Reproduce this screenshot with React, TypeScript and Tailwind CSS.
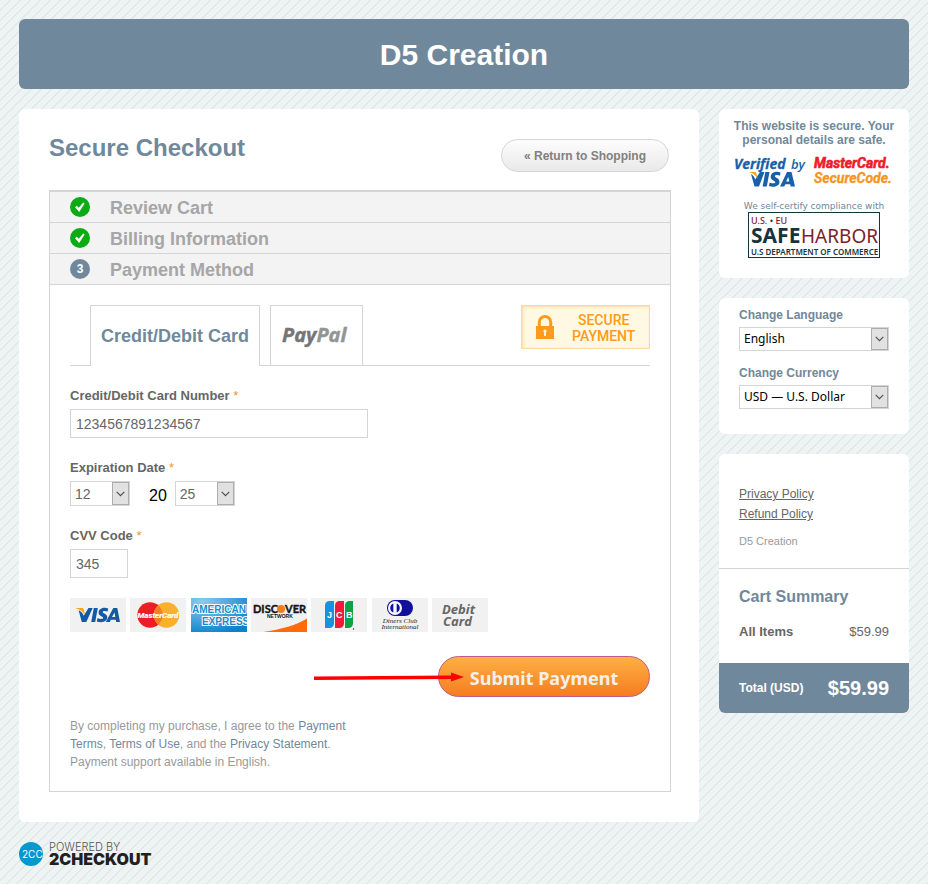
import React, { useState } from 'react';

interface Option {
  value: string;
  label: string;
}

const steps = [
  { id: 1, title: 'Review Cart', done: true },
  { id: 2, title: 'Billing Information', done: true },
  { id: 3, title: 'Payment Method', done: false },
];

const months: Option[] = ['01', '02', '03', '04', '05', '06', '07', '08', '09', '10', '11', '12'].map((m) => ({ value: m, label: m }));
const years: Option[] = ['24', '25', '26', '27', '28', '29', '30'].map((y) => ({ value: y, label: y }));
const languages: Option[] = [
  { value: 'en', label: 'English' },
  { value: 'es', label: 'Español' },
  { value: 'fr', label: 'Français' },
];
const currencies: Option[] = [
  { value: 'usd', label: 'USD — U.S. Dollar' },
  { value: 'eur', label: 'EUR — Euro' },
];

interface SelectBoxProps {
  id: string;
  label?: string;
  options: Option[];
  value: string;
  onChange: (value: string) => void;
  className: string;
}

function SelectBox({ id, label, options, value, onChange, className }: SelectBoxProps) {
  return (
    <div className="relative">
      <select
        id={id}
        aria-label={label}
        value={value}
        onChange={(e) => onChange(e.target.value)}
        className={`block appearance-none rounded-none border border-[#d5d5d5] bg-white outline-none ${className}`}
      >
        {options.map((o) => (
          <option key={o.value} value={o.value}>{o.label}</option>
        ))}
      </select>
      <span className="pointer-events-none absolute inset-y-px right-px flex w-[17px] items-center justify-center border border-[#adadad] bg-[#e1e1e1]">
        <svg width="9" height="6" viewBox="0 0 9 6" fill="none" stroke="#505050" strokeWidth="1.2">
          <path d="M.7 .8 4.5 4.6 8.3 .8" />
        </svg>
      </span>
    </div>
  );
}

function FieldLabel({ htmlFor, children }: { htmlFor: string; children: React.ReactNode }) {
  return (
    <label htmlFor={htmlFor} className="block pt-px text-[13px] leading-[18px] font-bold text-[#666]">
      {children} <span className="font-normal text-[#f7941d]">*</span>
    </label>
  );
}

function CheckIcon() {
  return (
    <svg width="20" height="20" viewBox="0 0 20 20">
      <circle cx="10" cy="10" r="10" fill="#0aab13" />
      <path d="M5 10.2 6.8 8.8 8.8 10.7 13.2 5.6 14.6 6.5 9.2 15Z" fill="#fff" />
    </svg>
  );
}

function LockIcon() {
  return (
    <svg width="18" height="24" viewBox="0 0 18 24" className="shrink-0">
      <path d="M3.3 12V7.2a5.7 5.7 0 0 1 11.4 0V12" fill="none" stroke="#ff9a1a" strokeWidth="3" />
      <rect y="11" width="18" height="13" fill="#ff9a1a" />
      <path d="M9 14.6a1.7 1.7 0 0 1 1 3V21H8v-3.4a1.7 1.7 0 0 1 1-3Z" fill="#fff6dd" />
    </svg>
  );
}

function PayPalLogo() {
  return (
    <svg width="74" height="30" viewBox="0 0 74 30" role="img" aria-label="PayPal" className="font-['Noto_Sans',sans-serif] text-[20px] font-bold italic">
      <text x="2" y="21" fill="#757575" stroke="#757575" strokeWidth="0.4">Pay<tspan fill="#949494" stroke="#949494">Pal</tspan></text>
    </svg>
  );
}

/* Accepted cards, each 56x34 */

function VisaCard() {
  return (
    <svg width="56" height="34" viewBox="0 0 56 34" role="img" aria-label="Visa">
      <rect width="56" height="34" fill="#f1f1f1" />
      <path d="M18.5 10h4.2L16.3 24h-4.5L8.6 12.2c2.5 1 4.2 2.8 5.1 5.6Z" fill="#1459a3" />
      <path d="M5.2 10h6.5c1.2 0 1.9.5 2.1 1.6l1.2 5.9C13.5 13.8 10 11.2 5.2 10Z" fill="#f8a51b" />
      <path d="M23.8 10h4l-2.6 14h-4Z" fill="#1459a3" />
      <path d="M38.2 10.4 37.6 13.6c-1.8-.8-4.8-.9-4.9.5 0 1.4 4.8 1.800 4.600 5.500-.2 4.500-6.200 5.400-10.500 3.800l.7-3.300c2.200 1.100 5.500 1.300 5.600-.3 0-1.500-4.600-1.700-4.500-5.300.2-4.400 5.500-5.500 9.600-4.100Z" fill="#1459a3" />
      <path d="M43.3 10h4L50 24h-3.800l-.5-2.200h-4.900L39.900 24h-4.100ZM44.5 14.500 42 19h3.300Z" fillRule="evenodd" fill="#1459a3" />
    </svg>
  );
}

function MasterCard() {
  return (
    <svg width="56" height="34" viewBox="0 0 56 34" role="img" aria-label="MasterCard">
      <rect width="56" height="34" fill="#f1f1f1" />
      <circle cx="20" cy="17" r="12.7" fill="#ee1c25" />
      <circle cx="36.5" cy="17" r="12.7" fill="#fbb02d" />
      <path d="M28.25 7.3a12.7 12.7 0 0 1 0 19.4 12.7 12.7 0 0 1 0-19.4Z" fill="#f58024" />
      <text x="28" y="20" textAnchor="middle" fill="#fff" stroke="#fff" strokeWidth="0.2" className="font-['Roboto',sans-serif] text-[8px] font-bold italic">MasterCard</text>
    </svg>
  );
}

function AmexCard() {
  return (
    <svg width="56" height="34" viewBox="0 0 56 34" role="img" aria-label="American Express">
      <defs>
        <radialGradient id="amex" cx="0.2" cy="0.1" r="1">
          <stop offset="0" stopColor="#8ccbee" />
          <stop offset="1" stopColor="#0d82cb" />
        </radialGradient>
      </defs>
      <rect width="56" height="34" fill="url(#amex)" />
      <g fill="#1c8bce" stroke="#fff" strokeWidth="2" paintOrder="stroke" className="font-['Liberation_Sans',Arial,sans-serif] text-[10px] font-bold">
        <text x="1" y="15">AMERICAN</text>
        <text x="11" y="27">EXPRESS</text>
      </g>
    </svg>
  );
}

function DiscoverCard() {
  return (
    <svg width="56" height="34" viewBox="0 0 56 34" role="img" aria-label="Discover Network">
      <rect width="56" height="34" fill="#f1f1f1" />
      <path d="M12 34C30 31.5 46 27 56 20.5V34Z" fill="#ff6a0a" />
      <g fill="#141414" className="font-['Lato',sans-serif] text-[11px] font-bold">
        <text x="2" y="15" stroke="#141414" strokeWidth="0.4">DISC</text>
        <text x="34" y="15" stroke="#141414" strokeWidth="0.4">VER</text>
      </g>
      <circle cx="30" cy="11" r="4" fill="#f47b20" />
      <text x="16" y="20" fill="#141414" className="font-['Liberation_Sans',Arial,sans-serif] text-[5px] font-bold">NETWORK</text>
    </svg>
  );
}

function JcbCard() {
  return (
    <svg width="56" height="34" viewBox="0 0 56 34" role="img" aria-label="JCB">
      <rect width="56" height="34" fill="#f1f1f1" />
      <path d="M18.5 3H23v22.5a4.5 4.5 0 0 1-4.5 4.500H14V7.500A4.500 4.500 0 0 1 18.500 3Z" fill="#1593e0" />
      <path d="M28.5 3H33v22.5a4.5 4.5 0 0 1-4.5 4.500H24V7.500A4.500 4.500 0 0 1 28.500 3Z" fill="#ee1c36" />
      <path d="M38.5 3H42v22.5a4.5 4.5 0 0 1-4.5 4.500H34V7.500A4.500 4.500 0 0 1 38.500 3Z" fill="#0aa446" />
      <g fill="#fff" className="font-['Liberation_Sans',Arial,sans-serif] text-[9px] font-bold">
        <text x="16" y="20">J</text>
        <text x="25" y="20">C</text>
        <text x="35" y="20">B</text>
      </g>
      <circle cx="42.5" cy="31" r="0.7" fill="#222" />
    </svg>
  );
}

function DinersCard() {
  return (
    <svg width="56" height="34" viewBox="0 0 56 34" role="img" aria-label="Diners Club International">
      <rect width="56" height="34" fill="#f1f1f1" />
      <path d="M23 2h10a8 8 0 0 1 0 16H23a8 8 0 0 1 0-16Z" fill="#10109c" />
      <circle cx="23" cy="10" r="7" fill="#f6f6fb" />
      <path d="M21.3 5.6v8.8a4.7 4.7 0 0 1 0-8.8ZM24.7 5.6v8.8a4.7 4.7 0 0 0 0-8.8Z" fill="#10109c" />
      <g fill="#222" textAnchor="middle" className="font-['Liberation_Serif','Times_New_Roman',serif] text-[7px] italic">
        <text x="28" y="25">Diners Club</text>
        <text x="28" y="31">International</text>
      </g>
    </svg>
  );
}

function DebitCard() {
  return (
    <svg width="56" height="34" viewBox="0 0 56 34" role="img" aria-label="Debit Card">
      <rect width="56" height="34" fill="#f1f1f1" />
      <g fill="#666" className="font-['Open_Sans',sans-serif] text-[13px] font-bold italic">
        <text x="10" y="16">Debit</text>
        <text x="11" y="28">Card</text>
      </g>
    </svg>
  );
}

function VerifiedByVisa() {
  return (
    <svg width="76" height="34" viewBox="0 0 76 34" role="img" aria-label="Verified by Visa">
      <g fill="#1860a8" className="font-['Open_Sans',sans-serif] italic">
        <text x="1" y="14" stroke="#1860a8" strokeWidth="0.3" className="text-[14px] font-bold">Verified</text>
        <text x="58" y="14" className="text-[13px] font-semibold">by</text>
      </g>
      <path d="M27 17h4.5L26 31.5h-4.500L18 19c2 1 3.500 3 4.200 5.500Z" fill="#1860a8" />
      <path d="M16 17h5.5c1.2 0 1.7.6 2 1.700l1 5C23 20.500 20.500 18.500 16 17Z" fill="#f8a51b" />
      <path d="M32.3 17h4.2l-2.7 14.5h-4.200Z" fill="#1860a8" />
      <path d="M47.5 17.4 47 20.7c-2-.8-5-.9-5.1.5 0 1.500 4.800 1.900 4.600 5.700-.2 4.700-6.400 5.600-10.500 4l.6-3.400c2.300 1.100 5.600 1.300 5.700-.3 0-1.600-4.700-1.800-4.600-5.500.2-4.600 5.700-5.700 9.800-4.300Z" fill="#1860a8" />
      <path d="M54 17h4.5L62 31.5h-4.300l-.5-2.200h-4.800l-1.200 2.200H47ZM55.200 21.700 53.200 26.400h3.100Z" fillRule="evenodd" fill="#1860a8" />
    </svg>
  );
}

function SecureCodeLogo() {
  return (
    <svg width="82" height="34" viewBox="0 0 82 34" role="img" aria-label="MasterCard SecureCode" className="font-['Roboto',sans-serif] text-[14px] font-bold italic">
      <text x="1" y="13" fill="#ed1c2e" stroke="#ed1c2e" strokeWidth="0.600">MasterCard.</text>
      <text x="1" y="28" fill="#f7941d" stroke="#f7941d" strokeWidth="0.300">SecureCode.</text>
    </svg>
  );
}

function SafeHarborLogo() {
  return (
    <svg width="132" height="46" viewBox="0 0 132 46" role="img" aria-label="U.S. - EU Safe Harbor" className="mx-auto font-['Noto_Sans',sans-serif]">
      <rect x="0.5" y="0.5" width="131" height="45" fill="#fff" stroke="#16343a" />
      <text x="3" y="12" fill="#7d2228" className="text-[9px] font-medium">U.S. <tspan fill="#16343a">•</tspan> EU</text>
      <text x="3" y="31" fill="#16343a" className="text-[21px] font-bold">SAFE</text>
      <text x="53" y="31" fill="#7d2228" className="text-[19px]">HARBOR</text>
      <text x="3" y="43" fill="#16343a" className="text-[8px] font-semibold">U.S DEPARTMENT OF COMMERCE</text>
    </svg>
  );
}

function PoweredByLogo() {
  return (
    <svg width="140" height="26" viewBox="0 0 140 26" role="img" aria-label="Powered by 2Checkout" className="font-['Inter',sans-serif]">
      <circle cx="12" cy="12" r="12" fill="#0399cc" />
      <text x="3" y="16" fill="#fff" className="text-[10px]">2CC</text>
      <text x="30" y="9" fill="#555" className="text-[11px] font-light">POWERED BY</text>
      <text x="30" y="23" fill="#231f20" className="text-[16px] font-black">2CHECKOUT</text>
    </svg>
  );
}

export default function App() {
  const [cardNumber, setCardNumber] = useState('1234567891234567');
  const [month, setMonth] = useState('12');
  const [year, setYear] = useState('25');
  const [cvv, setCvv] = useState('345');
  const [language, setLanguage] = useState('en');
  const [currency, setCurrency] = useState('usd');

  return (
    <div className="min-h-screen bg-[#eef4f4] bg-[linear-gradient(135deg,#e2e8e8_10%,#eef4f4_10%,#eef4f4_50%,#e2e8e8_50%,#e2e8e8_60%,#eef4f4_60%)] bg-[length:10px_10px] px-[19px] pt-[19px] pb-4 font-['Liberation_Sans',Arial,sans-serif]">
      <header className="flex h-[70px] items-center justify-center rounded-md bg-[#70889c] pt-[2px]">
        <h1 className="text-[30px] leading-9 font-bold text-white">D5 Creation</h1>
      </header>

      <div className="mt-5 flex items-start gap-5">
        <main className="min-w-0 flex-1 rounded-md bg-white pt-[30px] pr-7 pb-[30px] pl-[30px]">
          <div className="flex items-start justify-between pr-[2px]">
            <h2 className="text-2xl leading-[18px] font-bold text-[#70889c]">Secure Checkout</h2>
            <button type="button" className="h-[33px] w-[168px] cursor-pointer rounded-full border border-[#d5d5d5] bg-linear-to-b from-[#fdfdfd] to-[#e9e9e9] text-xs font-bold text-[#808080]">
              « Return to Shopping
            </button>
          </div>

          <div className="mt-[18px] border border-t-2 border-[#d5d5d5]">
            {/* Checkout steps */}
            <ol>
              {steps.map((step) => (
                <li key={step.id} className="flex h-[31px] items-center gap-5 border-b border-[#d5d5d5] bg-[#f3f3f3] px-5">
                  {step.done ? (
                    <CheckIcon />
                  ) : (
                    <span className="flex size-5 items-center justify-center rounded-full bg-[#70889c] text-xs font-bold text-white">{step.id}</span>
                  )}
                  <h3 className="pt-[2px] text-lg leading-5 font-bold text-[#a6a6a6]">{step.title}</h3>
                </li>
              ))}
            </ol>

            <form className="p-5" onSubmit={(e) => e.preventDefault()}>
              {/* Payment type tabs */}
              <div className="flex items-start justify-between border-b border-[#d5d5d5] pl-5">
                <div className="-mb-px flex gap-[10px]">
                  <button type="button" className="h-[61px] w-[170px] border border-b-0 border-[#d5d5d5] bg-white text-lg font-bold whitespace-nowrap text-[#70889c]">
                    Credit/Debit Card
                  </button>
                  <button type="button" className="flex h-[61px] w-[93px] items-center justify-center border border-[#d5d5d5] bg-white">
                    <PayPalLogo />
                  </button>
                </div>
                <div className="flex h-11 w-[129px] items-center border border-[#fbd9a3] bg-[#fff9e3] pr-4 pl-[14px] shadow-[inset_1px_1px_3px_#fbd9a3]">
                  <LockIcon />
                  <p className="flex-1 pt-[2px] pl-[18px] text-center font-['Roboto',sans-serif] text-sm leading-4 font-medium text-[#ff9a1a]">SECURE PAYMENT</p>
                </div>
              </div>

              <div className="mt-5">
                <FieldLabel htmlFor="card-number">Credit/Debit Card Number</FieldLabel>
                <input
                  id="card-number"
                  type="text"
                  value={cardNumber}
                  onChange={(e) => setCardNumber(e.target.value)}
                  className="mt-1 block h-[29px] w-[298px] border border-[#d5d5d5] bg-white px-[5px] text-sm text-[#666] outline-none"
                />
              </div>

              <div className="mt-5">
                <FieldLabel htmlFor="exp-month">Expiration Date</FieldLabel>
                <div className="mt-1 flex items-center">
                  <SelectBox id="exp-month" options={months} value={month} onChange={setMonth} className="h-[25px] w-[60px] px-1 text-sm text-[#666]" />
                  <span className="pt-[5px] pr-2 pl-[19px] text-base leading-5 text-black">20</span>
                  <SelectBox id="exp-year" label="Expiration year" options={years} value={year} onChange={setYear} className="h-[25px] w-[60px] px-1 text-sm text-[#666]" />
                </div>
              </div>

              <div className="mt-5">
                <FieldLabel htmlFor="cvv">CVV Code</FieldLabel>
                <input
                  id="cvv"
                  type="text"
                  value={cvv}
                  onChange={(e) => setCvv(e.target.value)}
                  className="mt-1 block h-[29px] w-[58px] border border-[#d5d5d5] bg-white px-[5px] text-sm text-[#666] outline-none"
                />
              </div>

              <div className="mt-5 flex w-[418px] justify-between">
                <VisaCard />
                <MasterCard />
                <AmexCard />
                <DiscoverCard />
                <JcbCard />
                <DinersCard />
                <DebitCard />
              </div>

              <div className="mt-6 flex justify-end">
                <div className="relative">
                  <button type="submit" className="h-[41px] w-[212px] cursor-pointer rounded-full border border-[#c05a86] bg-linear-to-b from-[#fdb042] to-[#f57c20] pt-[2px] font-['Noto_Sans',sans-serif] text-lg leading-6 font-bold text-[#f3f0ec]">
                    Submit Payment
                  </button>
                  <svg width="150" height="10" viewBox="0 0 150 10" className="pointer-events-none absolute top-4 right-[186px]">
                    <path d="M0 4.500 137 3.500V.5L150 5 137 9.500V7L0 8Z" fill="#fe0000" />
                  </svg>
                </div>
              </div>

              <p className="mt-5 w-[290px] text-xs leading-[18px] text-[#999]">
                By completing my purchase, I agree to the <a href="#payment-terms" className="text-[#70889c]">Payment Terms</a>, <a href="#terms" className="text-[#70889c]">Terms of Use</a>, and the{' '}
                <a href="#privacy" className="text-[#70889c]">Privacy Statement</a>. Payment support available in English.
              </p>
            </form>
          </div>
        </main>

        <aside className="flex w-[190px] shrink-0 flex-col gap-5">
          {/* Security badges */}
          <section className="rounded-md bg-white pt-[10px] pb-5 text-center">
            <p className="px-2 text-xs leading-[14px] font-bold text-[#70889c]">This website is secure. Your personal details are safe.</p>
            <div className="mt-2 flex justify-center gap-1">
              <VerifiedByVisa />
              <SecureCodeLogo />
            </div>
            <p className="mt-[11px] font-['DejaVu_Sans',sans-serif] text-[9px] leading-3 whitespace-nowrap text-[#70889c]">We self-certify compliance with</p>
            <SafeHarborLogo />
          </section>

          <section className="rounded-md bg-white px-5 pt-2 pb-[25px]">
            <label htmlFor="language" className="block pb-[3px] text-xs leading-[18px] font-bold text-[#70889c]">Change Language</label>
            <SelectBox id="language" options={languages} value={language} onChange={setLanguage} className="h-6 w-full px-1 font-['Noto_Sans',sans-serif] text-xs text-black" />
            <label htmlFor="currency" className="mt-[13px] block pb-[3px] text-xs leading-[18px] font-bold text-[#70889c]">Change Currency</label>
            <SelectBox id="currency" options={currencies} value={currency} onChange={setCurrency} className="h-6 w-full px-1 font-['Noto_Sans',sans-serif] text-xs text-black" />
          </section>

          <section className="overflow-hidden rounded-md bg-white">
            <div className="border-b border-[#d5d5d5] px-5 pt-[30px] pb-[18px]">
              <ul className="text-xs leading-5 text-[#666]">
                <li><a href="#privacy-policy" className="underline">Privacy Policy</a></li>
                <li><a href="#refund-policy" className="underline">Refund Policy</a></li>
              </ul>
              <p className="mt-2 text-[11px] leading-[18px] text-[#999]">D5 Creation</p>
            </div>
            <div className="px-5 pt-[18px] pb-[22px]">
              <h3 className="text-base leading-5 font-bold text-[#70889c]">Cart Summary</h3>
              <div className="mt-4 flex justify-between text-[13px] leading-[18px] text-[#666]">
                <span className="font-bold">All Items</span>
                <span>$59.99</span>
              </div>
            </div>
            <div className="flex h-[50px] items-center justify-between bg-[#70889c] px-5 font-bold text-white">
              <span className="text-xs">Total (USD)</span>
              <span className="text-xl">$59.99</span>
            </div>
          </section>
        </aside>
      </div>

      <footer className="mt-5">
        <PoweredByLogo />
      </footer>
    </div>
  );
}
